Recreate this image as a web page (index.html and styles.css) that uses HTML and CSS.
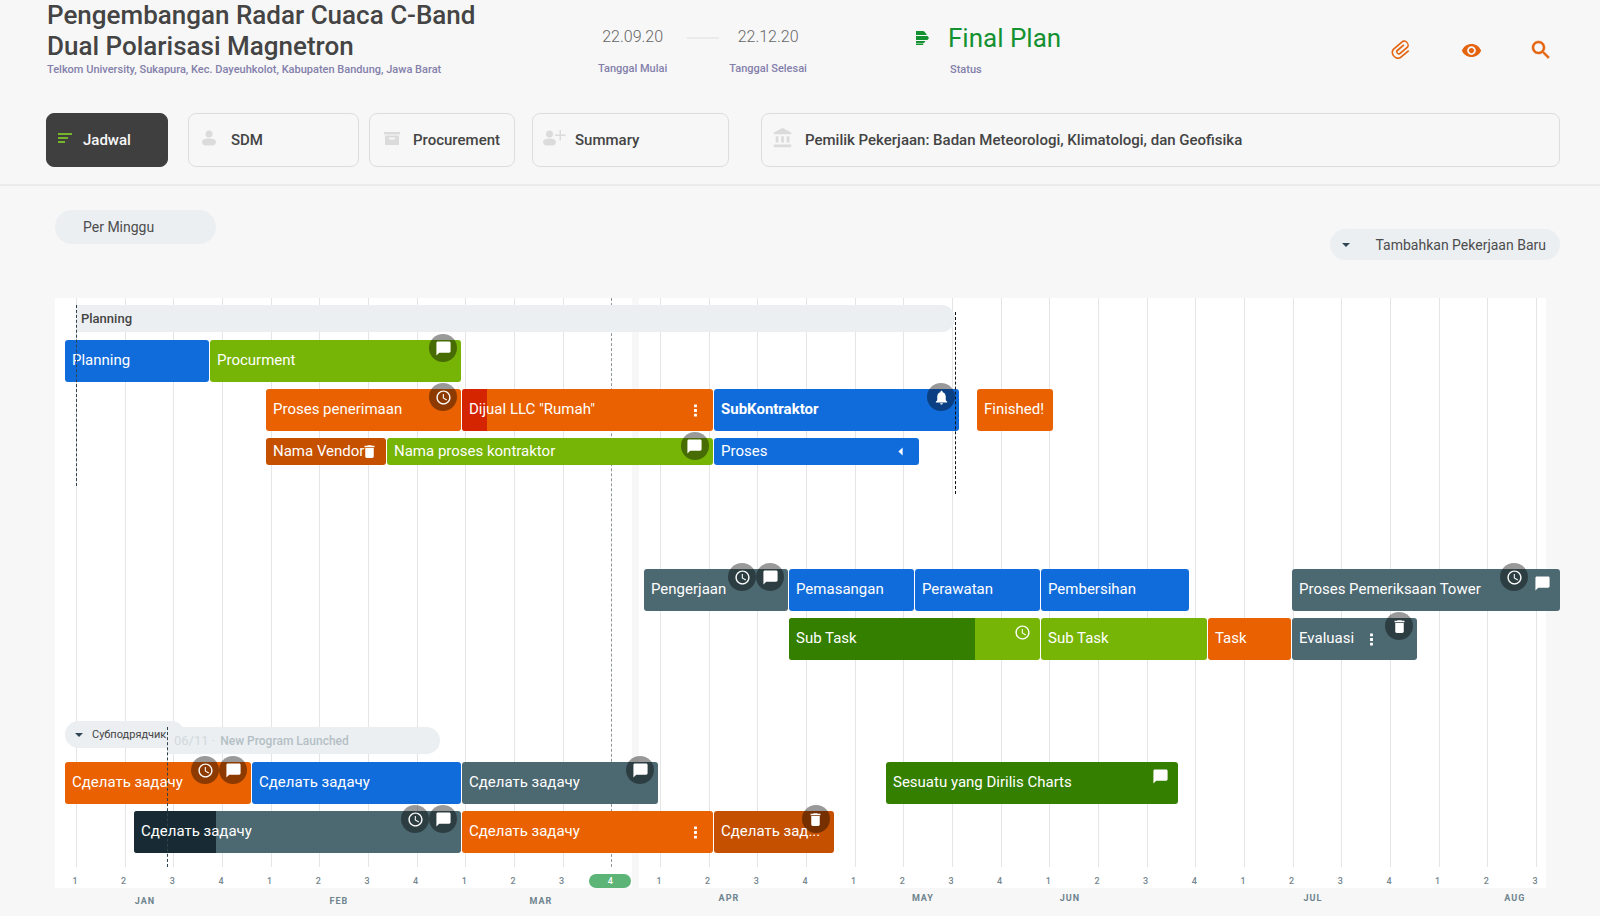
FILE: index.html
```html
<!DOCTYPE html>
<html lang="id">
<head>
<meta charset="utf-8">
<title>Pengembangan Radar Cuaca C-Band</title>
<meta name="viewport" content="width=device-width, initial-scale=1">
<link rel="stylesheet" href="styles.css">
</head>
<body>
<svg class="sprite" aria-hidden="true">
  <symbol id="i-chat" viewBox="0 0 24 24"><path d="M20 2H4c-1.100 0-1.990.9-1.990 2L2 22l4-4h14c1.100 0 2-.9 2-2V4c0-1.100-.9-2-2-2z"/></symbol>
  <symbol id="i-clock" viewBox="0 0 24 24"><path d="M11.990 2C6.470 2 2 6.480 2 12s4.470 10 9.990 10C17.520 22 22 17.520 22 12S17.520 2 11.990 2zM12 20c-4.420 0-8-3.580-8-8s3.580-8 8-8 8 3.580 8 8-3.580 8-8 8zM12.500 7H11v6l5.250 3.150.75-1.230-4.500-2.670z"/></symbol>
  <symbol id="i-trash" viewBox="0 0 24 24"><path d="M6 19c0 1.100.9 2 2 2h8c1.100 0 2-.9 2-2V7H6v12zM19 4h-3.500l-1-1h-5l-1 1H5v2h14V4z"/></symbol>
  <symbol id="i-bell" viewBox="0 0 24 24"><path d="M12 22c1.100 0 2-.9 2-2h-4c0 1.100.89 2 2 2zm6-6v-5c0-3.070-1.640-5.640-4.500-6.320V4c0-.83-.67-1.500-1.500-1.500s-1.500.67-1.500 1.500v.68C7.630 5.360 6 7.920 6 11v5l-2 2v1h16v-1l-2-2z"/></symbol>
  <symbol id="i-dots" viewBox="0 0 24 24"><path d="M10 3.500h4v4h-4zM10 10h4v4h-4zM10 16.500h4v4h-4z"/></symbol>
  <symbol id="i-left" viewBox="0 0 24 24"><path d="M15 6.500v11L9 12z"/></symbol>
</svg>

<header class="top">
  <div class="head">
    <div class="project">
      <h1 class="project-title">Pengembangan Radar Cuaca C-Band<br>Dual Polarisasi Magnetron</h1>
      <p class="caption">Telkom University, Sukapura, Kec. Dayeuhkolot, Kabupaten Bandung, Jawa Barat</p>
    </div>
    <div class="dates">
      <div class="date"><span class="date-value">22.09.20</span><span class="caption">Tanggal Mulai</span></div>
      <span class="date-rule"></span>
      <div class="date"><span class="date-value">22.12.20</span><span class="caption">Tanggal Selesai</span></div>
    </div>
    <div class="status">
      <svg class="status-icon" viewBox="0 0 13 14" aria-hidden="true"><path d="M0 0h7q1 0 1.800 1L11 4H0zM0 5h11.500L13 7l-1.500 2H0zM0 10h9.500L8 12H0zM0 12.500h7.500L7 14H0z"/></svg>
      <div class="status-text"><span class="status-value">Final Plan</span><span class="caption">Status</span></div>
    </div>
    <div class="actions">
      <button class="action" type="button" aria-label="Lampiran"><svg viewBox="0 0 24 24" width="22" height="22"><path transform="rotate(50 12 12) translate(12 12) scale(1.250 1) translate(-12.500 -12)" d="M16.500 6v11.500c0 2.210-1.790 4-4 4s-4-1.790-4-4V5a2.500 2.500 0 0 1 5 0v10.500c0 .55-.45 1-1 1s-1-.45-1-1V6H10v9.500a2.500 2.500 0 0 0 5 0V5c0-2.210-1.790-4-4-4S7 2.790 7 5v12.500c0 3.040 2.460 5.500 5.500 5.500s5.500-2.460 5.500-5.500V6h-1.500z"/></svg></button>
      <button class="action" type="button" aria-label="Lihat"><svg viewBox="0 0 24 24" width="21" height="21"><path d="M12 4.500C7 4.500 2.730 7.610 1 12c1.730 4.390 6 7.500 11 7.500s9.270-3.110 11-7.500c-1.730-4.390-6-7.500-11-7.500zM12 17c-2.760 0-5-2.240-5-5s2.240-5 5-5 5 2.240 5 5-2.240 5-5 5zm0-8c-1.660 0-3 1.340-3 3s1.340 3 3 3 3-1.340 3-3-1.340-3-3-3z"/></svg></button>
      <button class="action" type="button" aria-label="Cari"><svg viewBox="0 0 24 24" width="24" height="24" stroke="currentColor" stroke-width=".5"><path d="M15.500 14h-.79l-.28-.27C15.410 12.590 16 11.110 16 9.500 16 5.910 13.090 3 9.500 3S3 5.910 3 9.500 5.910 16 9.500 16c1.610 0 3.090-.59 4.230-1.570l.27.28v.79l5 4.990L20.490 19l-4.990-5zm-6 0C7.010 14 5 11.990 5 9.500S7.010 5 9.500 5 14 7.010 14 9.500 11.990 14 9.500 14z"/></svg></button>
    </div>
  </div>

  <nav class="tabs">
    <button class="tab tab-schedule tab-active" type="button"><svg width="14" height="10" viewBox="0 0 14 10"><path d="M0 0h14v2H0zM0 4h10v2H0zM0 8h7v2H0z"/></svg>Jadwal</button>
    <button class="tab tab-people" type="button"><svg width="14" height="16" viewBox="0 0 14 16"><circle cx="7" cy="4" r="3.500"/><path d="M0 12c0-2.500 3-3.500 7-3.500s7 1 7 3.500-2 3.500-4 3.500H4c-2 0-4-1-4-3.500z"/></svg>SDM</button>
    <button class="tab tab-procurement" type="button"><svg width="16" height="16" viewBox="0 0 16 16"><path fill-rule="evenodd" d="M0 2h16v2.500H0zM1 5.500h14V15H1zM5 7.500v2h6v-2z"/></svg>Procurement</button>
    <button class="tab tab-summary" type="button"><svg width="23" height="16" viewBox="0 0 23 16"><circle cx="6.500" cy="4" r="3.500"/><path d="M0 12c0-2.500 3-3.500 6.500-3.500S13 9.500 13 12s-2 3.500-4 3.500H4c-2 0-4-1-4-3.500zM16.500 0h1.500v4.500h4.500V6H18v4.500h-1.500V6H12V4.500h4.500z"/></svg>Summary</button>
    <button class="tab tab-owner" type="button"><svg width="22" height="22" viewBox="0 0 24 24"><path d="M4 10v7h3v-7H4zm6 0v7h3v-7h-3zM2 22h19v-3H2v3zm14-12v7h3v-7h-3zm-4.500-9L2 6v2h19V6l-9.500-5z"/></svg>Pemilik Pekerjaan: Badan Meteorologi, Klimatologi, dan Geofisika</button>
  </nav>
</header>

<main>
  <div class="toolbar">
    <button class="pill pill-period" type="button">Per Minggu</button>
    <button class="pill pill-add" type="button"><span class="caret"></span>Tambahkan Pekerjaan Baru</button>
  </div>

  <section class="gantt" aria-label="Jadwal">
    <div class="chart">
      <div class="panels"><span class="panel panel-first"></span><span class="panel panel-second"></span></div>

      <ol class="weeks">
        <li class="week"><span>1</span></li><li class="week"><span>2</span></li><li class="week"><span>3</span></li><li class="week"><span>4</span></li>
        <li class="week"><span>1</span></li><li class="week"><span>2</span></li><li class="week"><span>3</span></li><li class="week"><span>4</span></li>
        <li class="week"><span>1</span></li><li class="week"><span>2</span></li><li class="week"><span>3</span></li><li class="week week-today"><span>4</span></li>
        <li class="week"><span>1</span></li><li class="week"><span>2</span></li><li class="week"><span>3</span></li><li class="week"><span>4</span></li>
        <li class="week"><span>1</span></li><li class="week"><span>2</span></li><li class="week"><span>3</span></li><li class="week"><span>4</span></li>
        <li class="week"><span>1</span></li><li class="week"><span>2</span></li><li class="week"><span>3</span></li><li class="week"><span>4</span></li>
        <li class="week"><span>1</span></li><li class="week"><span>2</span></li><li class="week"><span>3</span></li><li class="week"><span>4</span></li>
        <li class="week"><span>1</span></li><li class="week"><span>2</span></li><li class="week"><span>3</span></li>
      </ol>

      <div class="groups">
        <div class="group">
          <div class="row row-head"><div class="phase" style="--gap:21;--len:879">Planning</div></div>
          <div class="row">
            <div class="task blue" style="--gap:10;--len:144"><span class="label">Planning</span></div>
            <div class="task green" style="--gap:1;--len:251"><span class="label">Procurment</span><div class="badges"><span class="badge"><svg><use href="#i-chat"/></svg></span></div></div>
          </div>
          <div class="row">
            <div class="task orange" style="--gap:211;--len:195"><span class="label">Proses penerimaan</span><div class="badges"><span class="badge"><svg><use href="#i-clock"/></svg></span></div></div>
            <div class="task orange" style="--gap:1;--len:251"><span class="done red" style="width:10%"></span><span class="label">Dijual LLC "Rumah"</span><button class="mark" type="button" aria-label="Menu"><svg><use href="#i-dots"/></svg></button></div>
            <div class="task blue" style="--gap:1;--len:245"><strong class="label">SubKontraktor</strong><div class="badges"><span class="badge"><svg><use href="#i-bell"/></svg></span></div></div>
            <div class="task orange" style="--gap:18;--len:76"><span class="label">Finished!</span></div>
          </div>
          <div class="row row-low">
            <div class="task rust" style="--gap:211;--len:120"><span class="label">Nama Vendor</span><button class="mark mark-tight" type="button" aria-label="Hapus"><svg><use href="#i-trash"/></svg></button></div>
            <div class="task green" style="--gap:1;--len:326"><span class="label">Nama proses kontraktor</span><div class="badges"><span class="badge"><svg><use href="#i-chat"/></svg></span></div></div>
            <div class="task blue" style="--gap:1;--len:205"><span class="label">Proses</span><button class="mark" type="button" aria-label="Ciutkan"><svg><use href="#i-left"/></svg></button></div>
          </div>
        </div>

        <div class="group group-build">
          <div class="row">
            <div class="task slate" style="--gap:589;--len:144"><span class="label">Pengerjaan</span><div class="badges"><span class="badge"><svg><use href="#i-clock"/></svg></span><span class="badge"><svg><use href="#i-chat"/></svg></span></div></div>
            <div class="task blue" style="--gap:1;--len:125"><span class="label">Pemasangan</span></div>
            <div class="task blue" style="--gap:1;--len:125"><span class="label">Perawatan</span></div>
            <div class="task blue" style="--gap:1;--len:148"><span class="label">Pembersihan</span></div>
            <div class="task slate" style="--gap:103;--len:268"><span class="label">Proses Pemeriksaan Tower</span><div class="badges"><span class="badge"><svg><use href="#i-clock"/></svg></span><span class="badge badge-plain"><svg><use href="#i-chat"/></svg></span></div></div>
          </div>
          <div class="row">
            <div class="task green" style="--gap:734;--len:251"><span class="done forest" style="width:74%"></span><span class="label">Sub Task</span><div class="badges"><span class="badge badge-plain"><svg><use href="#i-clock"/></svg></span></div></div>
            <div class="task green" style="--gap:1;--len:166"><span class="label">Sub Task</span></div>
            <div class="task orange" style="--gap:1;--len:83"><span class="label">Task</span></div>
            <div class="task slate" style="--gap:1;--len:125"><span class="label">Evaluasi</span><button class="mark mark-inner" type="button" aria-label="Menu"><svg><use href="#i-dots"/></svg></button><div class="badges"><span class="badge"><svg><use href="#i-trash"/></svg></span></div></div>
          </div>
        </div>

        <div class="group group-sub">
          <div class="row row-heads">
            <button class="phase phase-toggle" type="button" style="--gap:10;--len:120"><span class="caret"></span>Субподрядчик</button>
            <div class="phase phase-note" style="--gap:-18;--len:273"><span class="note-date">06/11 ·</span>New Program Launched</div>
          </div>
          <div class="row">
            <div class="task orange" style="--gap:10;--len:186"><span class="label">Сделать задачу</span><div class="badges"><span class="badge"><svg><use href="#i-clock"/></svg></span><span class="badge"><svg><use href="#i-chat"/></svg></span></div></div>
            <div class="task blue" style="--gap:1;--len:209"><span class="label">Сделать задачу</span></div>
            <div class="task slate" style="--gap:1;--len:196"><span class="label">Сделать задачу</span><div class="badges"><span class="badge"><svg><use href="#i-chat"/></svg></span></div></div>
            <div class="task forest" style="--gap:228;--len:292"><span class="label">Sesuatu yang Dirilis Charts</span><div class="badges"><span class="badge badge-plain"><svg><use href="#i-chat"/></svg></span></div></div>
          </div>
          <div class="row">
            <div class="task slate" style="--gap:79;--len:327"><span class="done ink" style="width:25%"></span><span class="label">Сделать задачу</span><div class="badges"><span class="badge"><svg><use href="#i-clock"/></svg></span><span class="badge"><svg><use href="#i-chat"/></svg></span></div></div>
            <div class="task orange" style="--gap:1;--len:251"><span class="label">Сделать задачу</span><button class="mark" type="button" aria-label="Menu"><svg><use href="#i-dots"/></svg></button></div>
            <div class="task rust" style="--gap:1;--len:120"><span class="label">Сделать зад...</span><div class="badges"><span class="badge"><svg><use href="#i-trash"/></svg></span></div></div>
          </div>
        </div>
      </div>

      <span class="marker marker-start" style="--gap:21"></span>
      <span class="marker marker-end" style="--gap:900"></span>
      <span class="marker marker-sub" style="--gap:112"></span>
    </div>

    <div class="months">
      <span class="month month-past" style="--gap:60;--len:60">JAN</span>
      <span class="month month-past" style="--gap:134;--len:60">FEB</span>
      <span class="month month-past" style="--gap:142;--len:60">MAR</span>
      <span class="month" style="--gap:128;--len:60">APR</span>
      <span class="month" style="--gap:134;--len:60">MAY</span>
      <span class="month" style="--gap:87;--len:60">JUN</span>
      <span class="month" style="--gap:183;--len:60">JUL</span>
      <span class="month" style="--gap:142;--len:60">AUG</span>
    </div>
  </section>
</main>
</body>
</html>
```
FILE: styles.css
```css
* { box-sizing: border-box; }

body {
  margin: 0;
  background: #f7f7f7;
  color: #444;
  font-family: Roboto, "Noto Sans", sans-serif;
  font-size: 15px;
}

button {
  margin: 0;
  padding: 0;
  border: 0;
  background: none;
  color: inherit;
  font: inherit;
  cursor: pointer;
}

svg { display: block; flex: none; fill: currentColor; }
.sprite { position: absolute; width: 0; height: 0; }

/* Header */
.top { border-bottom: 2px solid #ebebeb; }
.head {
  display: grid;
  grid-template-columns: 551fr 318fr 473fr auto;
  padding: 0 40px 0 47px;
}
.project-title {
  margin: 0;
  font-size: 26px;
  font-weight: 500;
  line-height: 31px;
  white-space: nowrap;
}
.caption {
  margin: 0;
  color: #8380ab;
  font-size: 11px;
  font-weight: 500;
  line-height: 16px;
  white-space: nowrap;
}
.dates { display: flex; align-items: flex-start; padding-top: 26px; }
.date { display: flex; flex-direction: column; align-items: center; gap: 13px; }
.date-value { color: #666; font-size: 16px; font-weight: 300; line-height: 22px; }
.date-rule { width: 32px; height: 2px; margin: 11px 10px 0 20px; background: #ebebeb; }
.status { display: flex; align-items: flex-start; gap: 19px; padding-top: 23px; color: #149131; }
.status-icon { width: 13px; height: 14px; margin-top: 8px; }
.status-text { display: flex; flex-direction: column; gap: 9px; }
.status-value { font-size: 26px; line-height: 30px; }
.status-text .caption { padding-left: 2px; }
.actions { display: flex; align-items: center; gap: 46px; padding-top: 22px; padding-right: 7px; color: #e4640f; }
.action { display: grid; place-items: center; width: 24px; height: 24px; }

.tabs {
  display: grid;
  grid-template-columns: 122fr 191fr 156fr 214fr 831fr;
  padding: 35px 40px 17px 46px;
}
.tab {
  display: flex;
  align-items: center;
  height: 54px;
  border: 1px solid #dcdddd;
  border-radius: 8px;
  font-weight: 500;
  white-space: nowrap;
}
.tab svg { margin-bottom: 5px; color: #dbdbdb; }
.tab-active { border-color: #3f3f3f; background: #3f3f3f; color: #f7f7f7; }
.tab.tab-active svg { color: #76b42a; }
.tab-schedule { gap: 11px; padding-left: 11px; }
.tab-people { gap: 15px; margin-left: 20px; padding-left: 13px; }
.tab-procurement { gap: 13px; margin-left: 10px; padding-left: 14px; }
.tab-summary { gap: 9px; margin-left: 17px; padding-left: 10px; }
.tab-owner { gap: 11px; margin-left: 32px; padding-left: 10px; }

/* Toolbar */
.toolbar { display: flex; justify-content: space-between; align-items: flex-start; padding: 24px 40px 38px 55px; }
.pill { display: flex; align-items: center; border-radius: 17px; background: #ebeff2; color: #4d4d4d; font-size: 14px; white-space: nowrap; }
.pill-period { width: 161px; height: 34px; padding-left: 28px; }
.pill-add { justify-content: space-between; width: 230px; height: 31px; margin-top: 19px; padding: 0 14px 0 12px; }
.caret { border: 4px solid transparent; border-top-color: #2f4655; border-bottom-width: 0; }

/* Gantt: --gap and --len are chart units, 1491 units across */
.gantt { margin: 0 54px 0 55px; }
.chart { display: grid; grid-template-columns: minmax(0, 1fr); }
.chart > * { grid-area: 1 / 1; }

.panels { display: flex; gap: 7px; }
.panel { background: #fff; }
.panel-first { flex: 577; }
.panel-second { flex: 907; }

.weeks {
  display: grid;
  grid-template-columns: repeat(30, minmax(0, 1fr)) 10px;
  margin: 0;
  padding: 0 0 0 calc(21 / 1491 * 100%);
  list-style: none;
}
.week { display: flex; flex-direction: column; gap: 7px; }
.week::before { content: ""; flex: 1; width: 0; border-left: 1px solid #e3e5e6; }
.week span {
  width: 42px;
  margin-left: -22px;
  border-radius: 7px;
  color: #75868f;
  font-size: 9px;
  font-weight: 500;
  line-height: 14px;
  text-align: center;
}
.week-today::before { border-left: 1px dashed #8f979c; }
.week-today span { background: #5cb577; color: #fff; }

.groups { padding: 7px 0 35px; }
.group { display: flex; flex-direction: column; gap: 7px; }
.group-build { margin-top: 104px; }
.group-sub { margin-top: 61px; }

.row { display: flex; height: 42px; }
.row-head { height: 28px; }
.row-low { height: 27px; }
.row-heads { align-items: flex-start; height: 34px; }
.task, .phase, .month {
  flex: none;
  width: calc(var(--len) / 1491 * 100%);
  margin-left: calc(var(--gap) / 1491 * 100%);
}
.phase {
  display: flex;
  align-items: center;
  height: 27px;
  padding-left: 5px;
  border-radius: 0 14px 14px 0;
  background: #ebeff2;
  font-size: 13px;
  font-weight: 500;
  white-space: nowrap;
}
.phase-toggle { gap: 9px; padding-left: 10px; border-radius: 14px; font-size: 11px; font-weight: 400; }
.phase-note { gap: 5px; margin-top: 6px; padding-left: 7px; color: #b4bfc5; font-size: 12px; }
.note-date { color: #d2d9dd; font-size: 13px; font-weight: 400; }

.task {
  position: relative;
  display: flex;
  align-items: center;
  padding: 0 4px 0 7px;
  border-radius: 3px;
  color: #fff;
  white-space: nowrap;
}
.label { position: relative; margin-bottom: 2px; }
.done { position: absolute; top: 0; bottom: 0; left: 0; border-radius: 3px 0 0 3px; }
.blue { background: #116cdb; }
.green { background: #76b406; }
.orange { background: #e96100; }
.rust { background: #c55000; }
.slate { background: #4c6871; }
.red { background: #d42400; }
.forest { background: #357f00; }
.ink { background: #182b34; }

.badges { position: absolute; top: -6px; right: 4px; display: flex; }
.badge, .mark { display: grid; place-items: center; width: 28px; height: 28px; }
.badge { border-radius: 50%; background: rgba(0, 0, 0, 0.4); }
.badge-plain { margin-top: 6px; background: none; }
.badge svg, .mark svg { width: 17px; height: 17px; }
.mark { margin-left: auto; }
.mark-inner { margin-right: 28px; }
.mark-tight { justify-content: center; width: 11px; margin-left: 0; }

.marker {
  position: relative;
  width: 0;
  margin-left: calc(var(--gap) / 1491 * 100%);
  border-left: 1px dashed #30424b;
}
.marker-start { height: 181px; margin-top: 7px; }
.marker-end { height: 182px; margin-top: 14px; border-color: #111; }
.marker-sub { height: 140px; margin-top: 429px; }

.months { display: flex; padding: 3px 0 8px; }
.month {
  color: #6d838e;
  font-size: 9px;
  font-weight: 700;
  letter-spacing: 1px;
  line-height: 14px;
  text-align: center;
}
.month-past { padding-top: 3px; }
```
